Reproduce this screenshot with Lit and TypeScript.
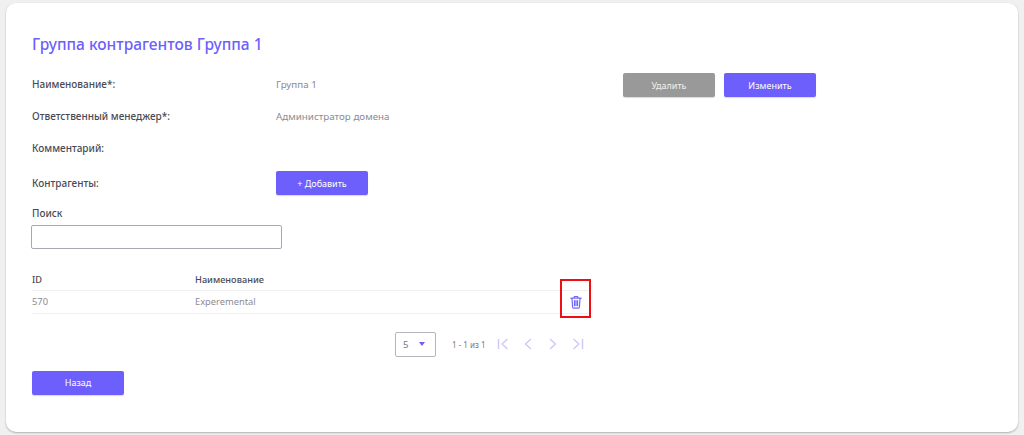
import { LitElement, html, css } from "lit";
import { customElement } from "lit/decorators.js";

const trash = html`<svg width="12" height="14" viewBox="0 0 14 16" fill="none" stroke="#7468fc" stroke-width="1.4" stroke-linecap="round" stroke-linejoin="round"><path d="M1 3.5h12M5 3.3V1.6h4v1.7M2.3 3.5l.7 10.4c0 .7.5 1.2 1.2 1.2h5.6c.7 0 1.2-.5 1.2-1.2l.7-10.4M5.2 6.5v5.8M7 6.5v5.8M8.8 6.5v5.8"/></svg>`;

const pag = (d: string) => html`<svg width="14" height="14" viewBox="0 0 14 14" fill="none" stroke="#cdc9fb" stroke-width="1.5" stroke-linecap="round" stroke-linejoin="round"><path d=${d}/></svg>`;

@customElement("app-root")
export class AppRoot extends LitElement {
  static styles = css`
    :host { display: block; height: 435px; background: #f0f0f0; padding: 3px 6px; box-sizing: border-box; font-family: "Noto Sans", sans-serif; }
    .card { height: 429px; box-sizing: border-box; background: #fff; border-radius: 10px; box-shadow: 0 1px 2px rgba(0,0,0,.28); padding: 31px 26px 0; }
    h1 { margin: 0; font-size: 15.5px; line-height: 20px; font-weight: 500; color: #6c5ffc; }
    .form { display: grid; grid-template-columns: 244px 347px 97px 97px; margin-top: 17px; width: max-content; }
    .label { font-size: 10px; font-weight: 500; color: #4a4a54; display: flex; align-items: center; }
    .value { font-size: 9.8px; color: #8b8b92; display: flex; align-items: center; }
    .r1 { height: 26px; } .r2 { height: 38px; } .r3 { height: 26px; } .r4 { height: 44px; }
    .actions { display: flex; gap: 9px; grid-column: 3 / 5; align-items: center; padding-top: 2px; box-sizing: border-box; }
    .gap { grid-column: 3 / 5; }
    button { width: 92px; height: 24px; border: 0; border-radius: 2px; background: #6c5ffc; color: #fff; font: 400 9px "Noto Sans", sans-serif; padding: 0; box-shadow: 0 1px 1px rgba(0,0,0,.15); }
    button.grey { background: #999; color: #f1f1f1; }
    .search { margin-top: 1px; }
    .search label { display: block; font-size: 10px; line-height: 14px; font-weight: 500; color: #4a4a54; }
    .search .input { margin: 5px 0 0 -1px; width: 251px; height: 24px; box-sizing: border-box; border: 1px solid #a8a8b2; border-radius: 2px; }
    table { margin-top: 22px; width: 559px; border-collapse: collapse; table-layout: fixed; }
    th { text-align: left; padding: 0 0 2px; height: 19px; box-sizing: border-box; font-size: 9.2px; font-weight: 500; color: #4a4a54; border-bottom: 1px solid #efefef; }
    td { padding: 0; height: 22px; font-size: 9.3px; color: #8b8b92; border-bottom: 1px solid #efefef; }
    .c1 { width: 163px; } .c3 { width: 36px; }
    .del { position: relative; }
    .del svg { display: block; margin: 0 0 0 15px; }
    .mark { position: absolute; left: 5px; top: -12px; width: 31px; height: 39px; box-sizing: border-box; border: 2px solid #ee0f14; }
    .pager { display: flex; align-items: center; width: 552px; margin-top: 18px; padding-left: 363px; box-sizing: border-box; }
    .select { width: 41px; height: 25px; box-sizing: border-box; border: 1px solid #b5b5bb; border-radius: 2px; display: flex; align-items: center; padding: 0 7px; justify-content: space-between; font-size: 9.6px; color: #77777e; flex: none; }
    .caret { width: 0; height: 0; border: 3.5px solid transparent; border-top: 4px solid #6c5ffc; border-bottom: 0; margin-right: 3px; }
    .range { margin-left: 16px; font-size: 8px; color: #77777e; white-space: nowrap; width: 45px; flex: none; }
    .icons { display: flex; gap: 11px; margin-left: -1px; flex: none; }
    .back { margin-top: 14px; display: block; }
  `;

  render() {
    return html`<div class="card">
      <h1>Группа контрагентов Группа 1</h1>
      <div class="form">
        <div class="label r1">Наименование*:</div>
        <div class="value r1">Группа 1</div>
        <div class="actions r1"><button class="grey">Удалить</button><button>Изменить</button></div>
        <div class="label r2">Ответственный менеджер*:</div>
        <div class="value r2">Администратор домена</div>
        <div class="gap r2"></div>
        <div class="label r3">Комментарий:</div>
        <div class="value r3"></div>
        <div class="gap r3"></div>
        <div class="label r4">Контрагенты:</div>
        <div class="value r4"><button>+ Добавить</button></div>
      </div>
      <div class="search">
        <label>Поиск</label>
        <div class="input"></div>
      </div>
      <table>
        <thead><tr><th class="c1">ID</th><th>Наименование</th><th class="c3"></th></tr></thead>
        <tbody><tr><td>570</td><td>Experemental</td><td class="del">${trash}<div class="mark"></div></td></tr></tbody>
      </table>
      <div class="pager">
        <div class="select"><span>5</span><span class="caret"></span></div>
        <div class="range">1 - 1 из 1</div>
        <div class="icons">
          ${pag("M2.5 2.5v9M11 2.5 6 7l5 4.5")}
          ${pag("M9.5 2.5 4.5 7l5 4.5")}
          ${pag("M4.5 2.5 9.5 7l-5 4.5")}
          ${pag("M3 2.5 8 7l-5 4.5M11.5 2.5v9")}
        </div>
      </div>
      <button class="back">Назад</button>
    </div>`;
  }
}
